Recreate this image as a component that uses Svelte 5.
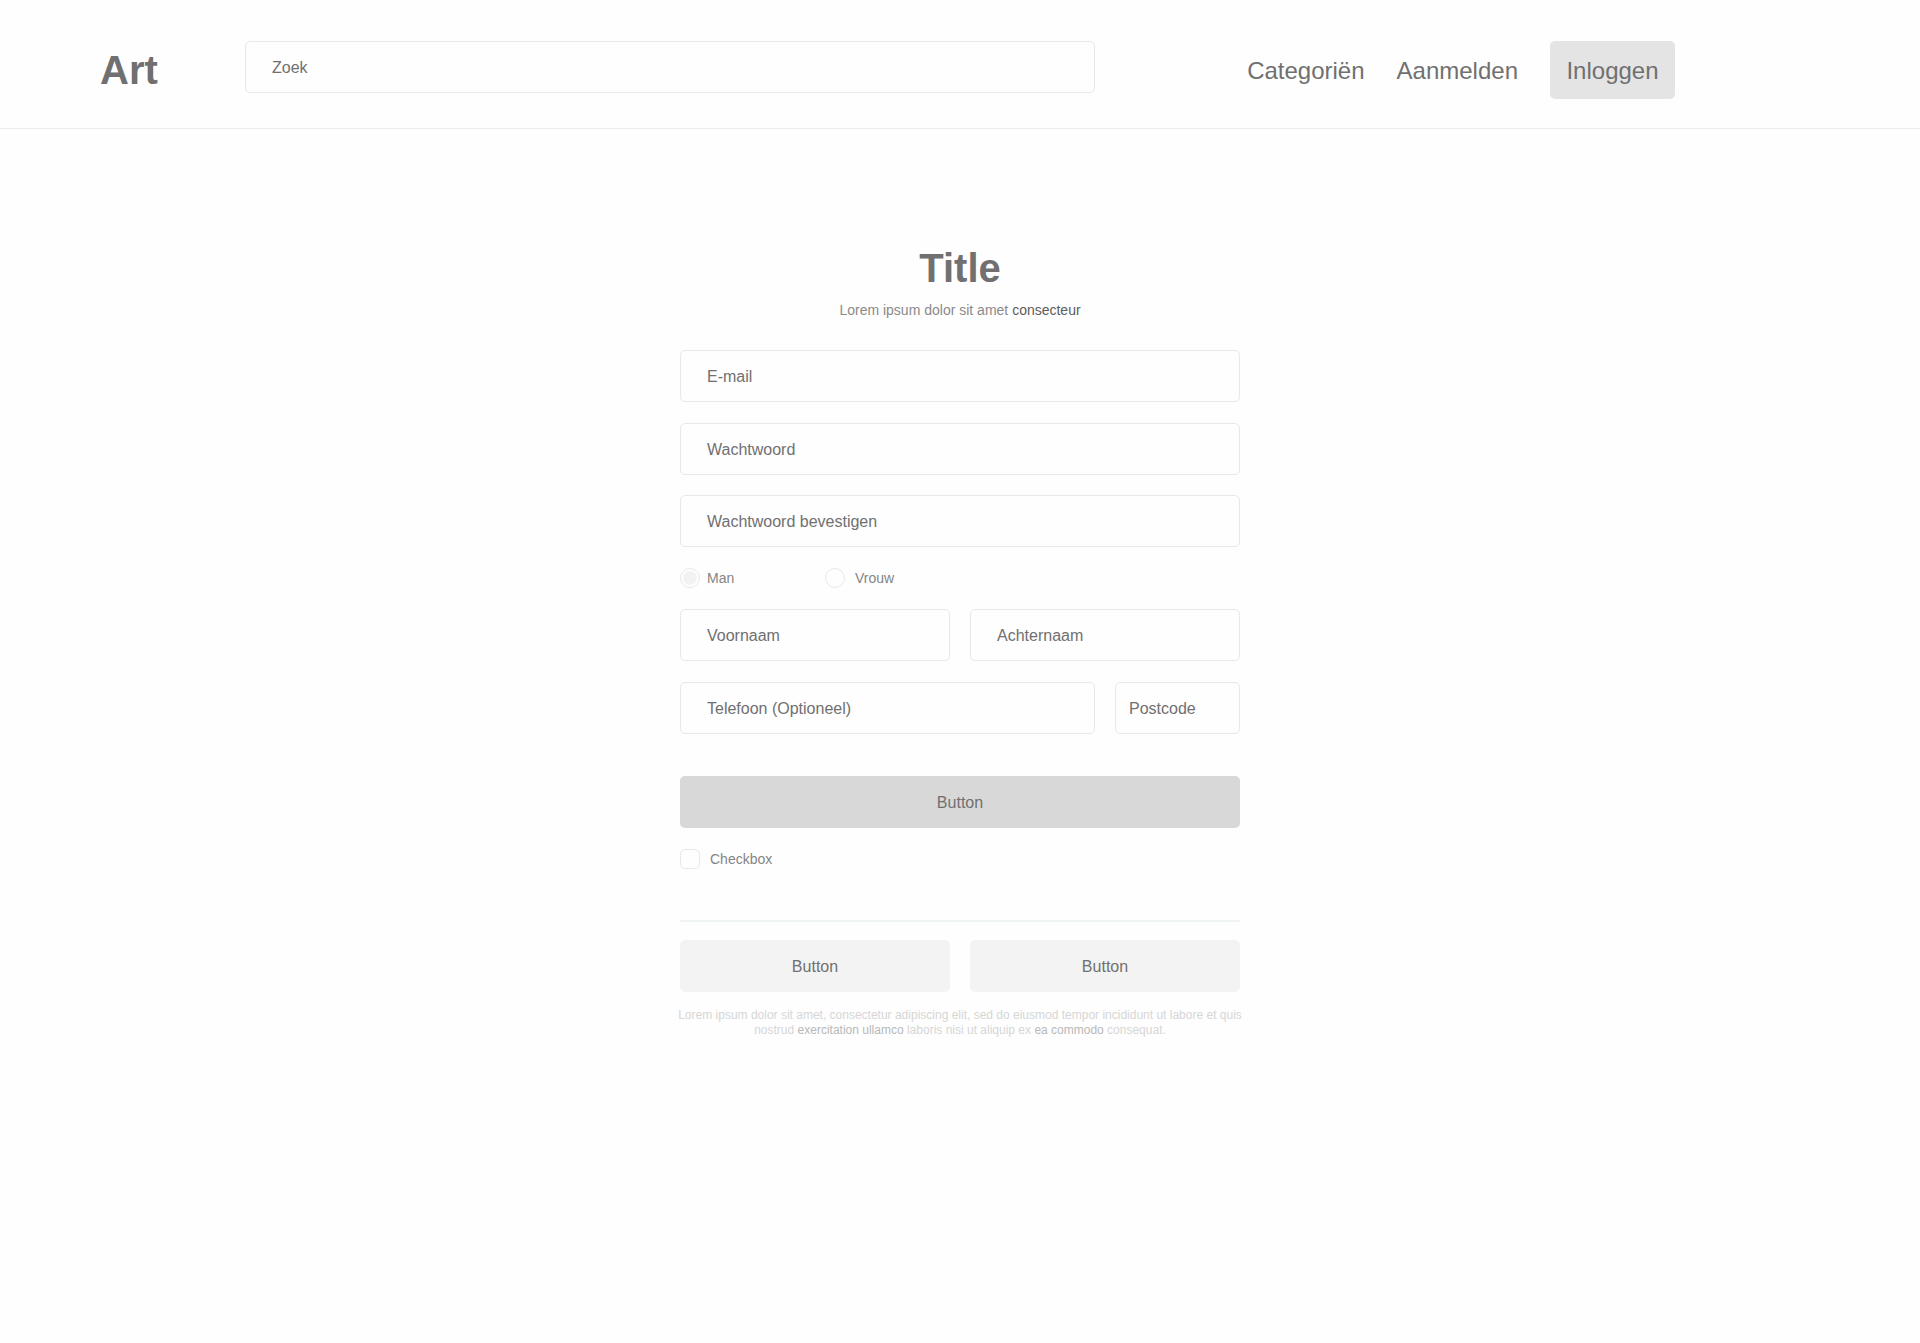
<script>
  let gender = $state('man');
  let remember = $state(false);
</script>

<header class="topbar">
  <a class="brand" href="#home">Art</a>
  <input class="field search" type="search" placeholder="Zoek" aria-label="Zoek" />
  <nav class="nav">
    <a href="#categorieen">Categoriën</a>
    <a href="#aanmelden">Aanmelden</a>
    <button class="login" type="button">Inloggen</button>
  </nav>
</header>

<main class="page">
  <form class="signup" onsubmit={(e) => e.preventDefault()}>
    <h1>Title</h1>
    <p class="intro">Lorem ipsum dolor sit amet <a href="#more">consecteur</a></p>

    <div class="stack">
      <input class="field" type="email" placeholder="E-mail" aria-label="E-mail" />
      <div class="passwords">
        <input class="field" type="password" placeholder="Wachtwoord" aria-label="Wachtwoord" />
        <input class="field" type="password" placeholder="Wachtwoord bevestigen" aria-label="Wachtwoord bevestigen" />
      </div>

      <div class="choices" role="radiogroup" aria-label="Geslacht">
        <label class="choice near">
          <input type="radio" name="gender" value="man" bind:group={gender} />
          Man
        </label>
        <label class="choice">
          <input type="radio" name="gender" value="vrouw" bind:group={gender} />
          Vrouw
        </label>
      </div>

      <div class="halves">
        <input class="field" type="text" placeholder="Voornaam" aria-label="Voornaam" />
        <input class="field" type="text" placeholder="Achternaam" aria-label="Achternaam" />
      </div>
      <div class="contact">
        <input class="field" type="tel" placeholder="Telefoon (Optioneel)" aria-label="Telefoon (Optioneel)" />
        <input class="field compact" type="text" placeholder="Postcode" aria-label="Postcode" />
      </div>
    </div>

    <button class="button primary" type="submit">Button</button>
    <label class="choice">
      <input type="checkbox" bind:checked={remember} />
      Checkbox
    </label>

    <hr />

    <div class="halves">
      <button class="button" type="button">Button</button>
      <button class="button" type="button">Button</button>
    </div>
    <p class="legal">
      <span class="line">Lorem ipsum dolor sit amet, consectetur adipiscing elit, sed do eiusmod tempor incididunt ut labore et quis</span>
      <span class="line">
        <span>nostrud</span>
        <a href="#terms">exercitation ullamco</a>
        <span>laboris nisi ut aliquip ex</span>
        <a href="#privacy">ea commodo</a>
        <span>consequat.</span>
      </span>
    </p>
  </form>
</main>

<style>
  :global(body) {
    margin: 0;
    background: #fefefe;
    color: #707070;
    font-family: 'Liberation Sans', Arial, sans-serif;
    font-size: 16px;
  }

  a {
    color: inherit;
    text-decoration: none;
  }

  input,
  button {
    box-sizing: border-box;
    margin: 0;
    font: inherit;
    color: inherit;
  }

  .topbar {
    display: flex;
    align-items: flex-start;
    padding: 41px 245px 27px 100px;
    border-bottom: 1px solid #ebebeb;
  }

  .brand {
    flex: 0 0 145px;
    font-size: 40px;
    font-weight: 700;
    line-height: 58px;
  }

  .search {
    flex: 1;
  }

  .nav {
    display: flex;
    gap: 32px;
    margin-left: 152px;
    font-size: 24px;
    line-height: 60px;
  }

  .login {
    min-width: 125px;
    height: 58px;
    padding: 0 16px;
    border: 0;
    border-radius: 5px;
    background: #e4e4e4;
  }

  .field {
    width: 100%;
    min-width: 0;
    height: 52px;
    padding: 2px 26px 0;
    border: 1px solid #e8e8e8;
    border-radius: 5px;
    background: transparent;
    appearance: none;
    outline-color: #bdbdbd;
  }

  .field::placeholder {
    color: #707070;
    opacity: 1;
  }

  .compact {
    padding: 2px 13px 0;
  }

  .page {
    padding: 116px 20px 80px;
  }

  .signup {
    max-width: 560px;
    margin: 0 auto;
  }

  h1 {
    margin: 0;
    font-size: 40px;
    line-height: 46px;
    text-align: center;
  }

  .intro {
    margin: 9px 0 30px;
    font-size: 14px;
    line-height: 20px;
    text-align: center;
    color: #8a8a8a;
  }

  .intro a {
    color: #5c5c5c;
  }

  .stack {
    display: grid;
    gap: 21px;
  }

  .passwords {
    display: grid;
    gap: 20px;
  }

  .choices,
  .halves {
    display: grid;
    grid-template-columns: 1fr 1fr;
    gap: 20px;
  }

  .choices {
    grid-template-columns: 125px 1fr;
  }

  .contact {
    display: grid;
    grid-template-columns: 83fr 25fr;
    gap: 20px;
  }

  .choice {
    display: flex;
    align-items: center;
    gap: 10px;
    font-size: 14px;
    line-height: 20px;
    color: #858585;
  }

  .near {
    gap: 7px;
  }

  .choice input {
    flex: none;
    width: 20px;
    height: 20px;
    border: 1px solid #e8e8e8;
    border-radius: 5px;
    background: transparent;
    appearance: none;
  }

  .choice input[type='radio'] {
    border-radius: 50%;
  }

  .choice input:checked {
    padding: 2px;
    background: #f3f3f3 content-box;
  }

  .button {
    height: 52px;
    padding: 2px 16px 0;
    border: 0;
    border-radius: 5px;
    background: #f3f3f3;
  }

  .primary {
    width: 100%;
    margin: 42px 0 21px;
    background: #d8d8d8;
  }

  hr {
    height: 2px;
    margin: 51px 0 18px;
    border: 0;
    background: #edf4f3;
  }

  .legal {
    margin: 16px -10px 0;
    font-size: 12px;
    line-height: 15px;
    text-align: center;
    color: #d6d6d6;
  }

  .line {
    display: block;
  }

  .legal a {
    color: #b8b8b8;
  }
</style>
